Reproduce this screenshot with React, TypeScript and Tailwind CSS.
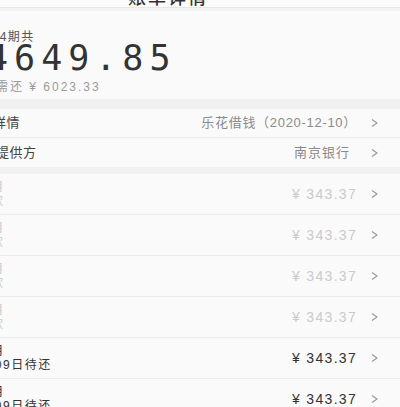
import React from 'react';

const FONT = "font-['Liberation_Sans','Noto_Sans_CJK_SC',sans-serif]";

type Period = {
  month: string;
  status: string;
  paid: boolean;
};

const periods: Period[] = [
  { month: '2021年01月', status: '已还款', paid: true },
  { month: '2021年02月', status: '已还款', paid: true },
  { month: '2021年03月', status: '已还款', paid: true },
  { month: '2021年04月', status: '已还款', paid: true },
  { month: '2021年05月', status: '05月09日待还', paid: false },
  { month: '2021年06月', status: '06月09日待还', paid: false },
];

function Chevron() {
  return (
    <svg width="7" height="10" viewBox="0 0 7 10" className="ml-[14px] shrink-0">
      <polyline points="1,1.5 6,5 1,8.5" fill="none" stroke="#9a9a9a" strokeWidth="1.2" />
    </svg>
  );
}

export default function App() {
  return (
    <div className={`w-[400px] h-[407px] overflow-hidden bg-[#fafafa] ${FONT}`}>
      <div className="-mt-[13px] flex flex-col">
        {/* Header */}
        <div className="h-[21px] border-b border-[#e6e6e6] bg-[#fcfcfc] pl-[128px]">
          <span className="text-[18px] leading-[20px] tracking-[2px] font-medium text-[#333]">账单详情</span>
        </div>
        <div className="h-[3px] bg-[#f3f3f3]" />

        {/* Summary */}
        <div className="pt-[18px] pb-[4px] flex flex-col">
          <p className="-ml-[22px] text-[12px] leading-[16px] tracking-[1.5px] text-[#555] whitespace-nowrap">分24期共</p>
          <p className="-ml-[13px] font-['DejaVu_Sans_Mono',monospace] text-[35px] leading-[26px] tracking-[6px] text-[#333] whitespace-nowrap">
            4649.85
          </p>
          <p className="mt-[8px] -ml-[18px] text-[12px] leading-[16px] tracking-[2px] text-[#9a9a9a] whitespace-nowrap">
            仍需还 ¥ 6023.33
          </p>
        </div>

        <div className="h-[10px] bg-[#f1f1f1]" />

        {/* Loan info */}
        <div className="h-[29px] flex items-center border-b border-[#ececec] pr-[22px]">
          <span className="-ml-[34px] text-[13px] tracking-[0.5px] text-[#444] whitespace-nowrap">借款详情</span>
          <span className="ml-auto text-[13px] tracking-[0.7px] text-[#8a8a8a] whitespace-nowrap">乐花借钱（2020-12-10）</span>
          <Chevron />
        </div>
        <div className="h-[29px] flex items-center pr-[22px]">
          <span className="-ml-[31px] text-[13px] tracking-[0.5px] text-[#444] whitespace-nowrap">资金提供方</span>
          <span className="ml-auto mr-[7px] text-[13px] tracking-[1px] text-[#8a8a8a] whitespace-nowrap">南京银行</span>
          <Chevron />
        </div>

        <div className="h-[7px] bg-[#f1f1f1]" />

        {/* Periods */}
        {periods.map((p, i) => {
          const tone = p.paid ? 'text-[#c9c9c9]' : 'text-[#333]';
          return (
            <div key={i} className="h-[41px] flex items-center border-b border-[#ececec] pr-[22px]">
              <div className="flex flex-col">
                <span className={`-ml-[71px] text-[12px] leading-[14px] tracking-[1.5px] whitespace-nowrap ${tone}`}>
                  {p.month}
                </span>
                <span
                  className={`${p.paid ? '-ml-[36px]' : '-ml-[35px]'} text-[12px] leading-[14px] tracking-[1.5px] whitespace-nowrap ${tone}`}
                >
                  {p.status}
                </span>
              </div>
              <span className={`ml-auto text-[14px] tracking-[1.3px] whitespace-nowrap ${p.paid ? 'text-[#cacaca]' : 'text-[#333]'}`}>
                ¥ 343.37
              </span>
              <Chevron />
            </div>
          );
        })}
      </div>
    </div>
  );
}
